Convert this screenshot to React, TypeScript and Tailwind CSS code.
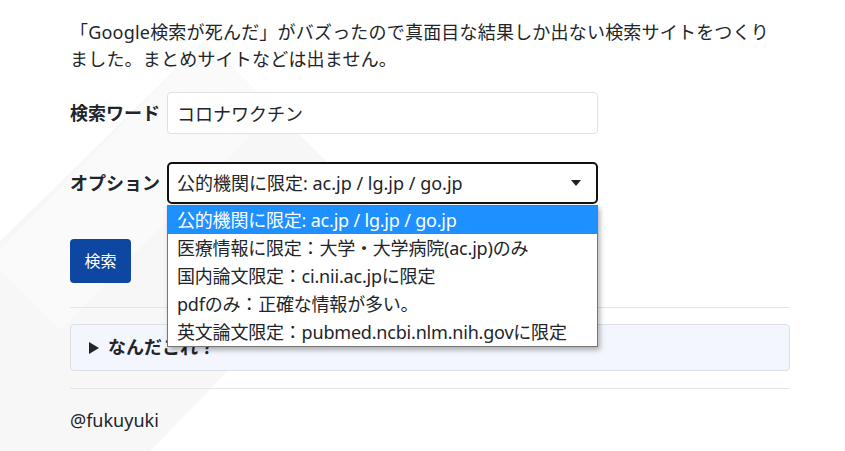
import { useState } from "react";

const options = [
  "公的機関に限定: ac.jp / lg.jp / go.jp",
  "医療情報に限定：大学・大学病院(ac.jp)のみ",
  "国内論文限定：ci.nii.ac.jpに限定",
  "pdfのみ：正確な情報が多い。",
  "英文論文限定：pubmed.ncbi.nlm.nih.govに限定",
];

export default function App() {
  const [query, setQuery] = useState("コロナワクチン");
  const [selected] = useState(0);

  return (
    <div
      className="relative min-h-[451px] overflow-hidden bg-white text-[#212529]"
      style={{ fontFamily: '"Noto Sans", "Noto Sans CJK JP", sans-serif' }}
    >
      {/* faint background watermark */}
      <svg className="absolute left-0 top-0" width="420" height="451" viewBox="0 0 420 451">
        <polygon points="205,40 380,215 150,451 -60,451 -60,300" fill="#f7f7f8" />
        <polygon points="205,40 275,110 60,330 -10,260" fill="#fafafb" />
      </svg>

      <div className="relative ml-[70px] w-[720px] pt-[19px]">
        <p className="text-[18px] leading-[27px] tracking-[0.2px]">
          「Google検索が死んだ」がバズったので真面目な結果しか出ない検索サイトをつくり
          <br />
          ました。まとめサイトなどは出ません。
        </p>

        <div className="mt-[19px] flex items-center">
          <label className="w-[97px] shrink-0 text-[18px] font-bold leading-[27px]">検索ワード</label>
          <input
            value={query}
            onChange={(e) => setQuery(e.target.value)}
            className="h-[42px] w-[431px] rounded-[4px] border border-[#dee2e6] bg-white px-[9px] text-[18px] text-[#212529] outline-none"
          />
        </div>

        <div className="mt-[28px] flex items-center">
          <label className="w-[97px] shrink-0 text-[18px] font-bold leading-[27px]">オプション</label>
          <div className="relative">
            <div className="flex h-[42px] w-[431px] items-center justify-between rounded-[5px] border-2 border-[#111] bg-white pl-[8px] pr-[15px] text-[18px]">
              <span>{options[selected]}</span>
              <svg width="10" height="6" viewBox="0 0 10 6">
                <polygon points="0,0 10,0 5,6" fill="#222" />
              </svg>
            </div>
            <ul className="absolute left-0 top-[43px] z-10 w-[431px] border border-[#767676] bg-white shadow-[2px_3px_5px_rgba(0,0,0,0.3)]">
              {options.map((o, i) => (
                <li
                  key={o}
                  className={`h-[28px] pl-[9px] text-[18px] leading-[28px] tracking-[-0.2px] ${
                    i === selected ? "bg-[#1e90ff] text-white" : "text-[#212529]"
                  }`}
                >
                  {o}
                </li>
              ))}
            </ul>
          </div>
        </div>

        <button className="mt-[35px] h-[44px] w-[61px] rounded-[4px] bg-[#0d47a1] text-[16px] text-white">
          検索
        </button>

        <hr className="mt-[24px] border-t border-[#e6e6e6]" />

        <div className="mt-[16px] flex h-[47px] items-center rounded-[4px] border border-[#dcdfe5] bg-[#f3f6fd] pl-[18px]">
          <svg width="10" height="12" viewBox="0 0 10 12" className="mr-[9px]">
            <polygon points="0,0 10,6 0,12" fill="#212529" />
          </svg>
          <span className="text-[18px] font-bold leading-[27px]">なんだこれ？</span>
        </div>

        <hr className="mt-[17px] border-t border-[#e6e6e6]" />

        <p className="mt-[18px] text-[18px] leading-[27px]">@fukuyuki</p>
      </div>
    </div>
  );
}
